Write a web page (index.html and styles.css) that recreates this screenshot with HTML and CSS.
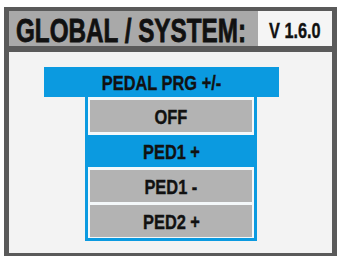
FILE: index.html
```html
<!DOCTYPE html>
<html>
<head>
<meta charset="utf-8">
<link rel="stylesheet" href="styles.css">
</head>
<body>
<div class="frame">
  <div class="header">
    <div class="title"><span class="cond">GLOBAL / SYSTEM:</span></div>
    <div class="version"><span class="cond">V 1.6.0</span></div>
  </div>
  <div class="content">
    <div class="menu-title"><span class="cond">PEDAL PRG +/-</span></div>
    <div class="list">
      <div class="item"><span class="cond">OFF</span></div>
      <div class="item selected"><span class="cond">PED1 +</span></div>
      <div class="item"><span class="cond">PED1 -</span></div>
      <div class="item"><span class="cond">PED2 +</span></div>
    </div>
  </div>
</div>
</body>
</html>
```
FILE: styles.css
```css
html, body {
  margin: 0;
  padding: 0;
  background: #ffffff;
  overflow: hidden;
}
body {
  width: 337px;
  height: 256px;
  font-family: "Liberation Sans", Arial, sans-serif;
  font-weight: bold;
  color: #111;
}
.frame {
  margin: 7px 0 0 4px;
  width: 333px;
  height: 252px;
  box-sizing: border-box;
  background: #5a5a5a;
  padding: 4px 5px 0 5px;
  display: flex;
  flex-direction: column;
}
.cond {
  display: inline-block;
  transform: scaleX(0.78);
  white-space: nowrap;
  -webkit-text-stroke: 0.4px #111;
}
.header {
  display: flex;
  height: 35px;
}
.title {
  flex: 1;
  min-width: 0;
  background: #a9a9a9;
  font-size: 33px;
  line-height: 35px;
  padding-top: 2px;
  white-space: nowrap;
}
.title .cond {
  transform: scaleX(0.735);
  transform-origin: left center;
  margin-left: 7px;
  margin-right: -83px;
  -webkit-text-stroke: 0.8px #111;
}
.version {
  width: 74px;
  background: #f5f5f5;
  font-size: 22px;
  line-height: 35px;
  padding-top: 2px;
  text-align: center;
}
.version .cond {
  transform: scaleX(0.74);
  margin: 0 -10px;
}
.content {
  margin-top: 6px;
  height: 201px;
  background: #f3f3f3;
  padding: 15px 0 0 35px;
  box-sizing: border-box;
}
.menu-title {
  width: 235px;
  height: 30px;
  background: #0b9ae0;
  font-size: 21px;
  line-height: 31px;
  text-align: center;
}
.list {
  margin-left: 41px;
  width: 172px;
  box-sizing: border-box;
  border: 3px solid #0b9ae0;
  border-top: none;
  background: #f4f8fa;
  padding: 3px 2px 1px 2px;
  display: flex;
  flex-direction: column;
  gap: 3px;
}
.item {
  height: 32px;
  background: #b3b3b3;
  font-size: 21px;
  line-height: 33px;
  text-align: center;
}
.item.selected {
  background: #0b9ae0;
  margin: 0 -2px;
}
```
